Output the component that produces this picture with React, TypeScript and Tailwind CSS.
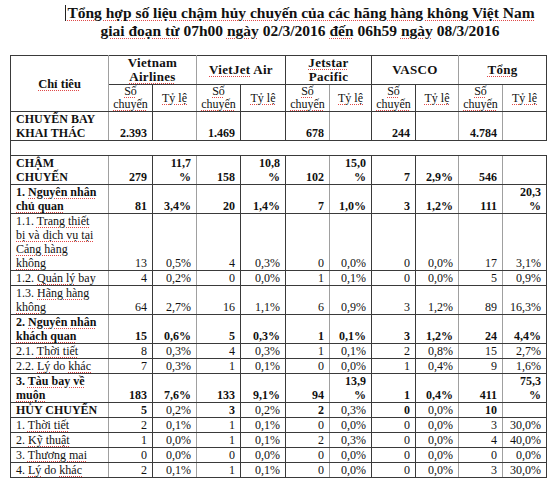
import type { ReactNode } from 'react';

const widths = [98, 44, 44, 44, 45, 44, 42, 44, 43, 44, 44];
// columns whose right-hand rule is drawn lighter in the document
const grayRight = [0, 2, 5, 8, 9];

function Sq({ children }: { children: ReactNode }) {
  return (
    <span className="underline decoration-dotted decoration-[#e04848] decoration-[1px] underline-offset-[2px]">
      {children}
    </span>
  );
}

type Row = {
  label: ReactNode;
  vals: string[];
  bold?: boolean;
  boldNums?: boolean;
};

const rows: Row[] = [
  {
    label: (
      <>
        CHUYẾN BAY
        <br />
        KHAI THÁC
      </>
    ),
    vals: ['2.393', '', '1.469', '', '678', '', '244', '', '4.784', ''],
    bold: true,
  },
  {
    label: (
      <>
        CHẬM
        <br />
        CHUYẾN
      </>
    ),
    vals: ['279', '11,7\n%', '158', '10,8\n%', '102', '15,0\n%', '7', '2,9%', '546', ''],
    bold: true,
  },
  {
    label: (
      <>
        1. <Sq>Nguyên nhân</Sq>
        <br />
        <Sq>chủ quan</Sq>
      </>
    ),
    vals: ['81', '3,4%', '20', '1,4%', '7', '1,0%', '3', '1,2%', '111', '20,3\n%'],
    bold: true,
  },
  {
    label: (
      <>
        1.1. <Sq>Trang thiết</Sq>
        <br />
        <Sq>bị và dịch vụ tại</Sq>
        <br />
        <Sq>Cảng hàng</Sq>
        <br />
        <Sq>không</Sq>
      </>
    ),
    vals: ['13', '0,5%', '4', '0,3%', '0', '0,0%', '0', '0,0%', '17', '3,1%'],
  },
  {
    label: (
      <>
        1.2. <Sq>Quản lý</Sq> bay
      </>
    ),
    vals: ['4', '0,2%', '0', '0,0%', '1', '0,1%', '0', '0,0%', '5', '0,9%'],
  },
  {
    label: (
      <>
        1.3. <Sq>Hãng hàng</Sq>
        <br />
        <Sq>không</Sq>
      </>
    ),
    vals: ['64', '2,7%', '16', '1,1%', '6', '0,9%', '3', '1,2%', '89', '16,3%'],
  },
  {
    label: (
      <>
        2. <Sq>Nguyên nhân</Sq>
        <br />
        <Sq>khách quan</Sq>
      </>
    ),
    vals: ['15', '0,6%', '5', '0,3%', '1', '0,1%', '3', '1,2%', '24', '4,4%'],
    bold: true,
  },
  {
    label: (
      <>
        2.1. <Sq>Thời tiết</Sq>
      </>
    ),
    vals: ['8', '0,3%', '4', '0,3%', '1', '0,1%', '2', '0,8%', '15', '2,7%'],
  },
  {
    label: (
      <>
        2.2. <Sq>Lý</Sq> do <Sq>khác</Sq>
      </>
    ),
    vals: ['7', '0,3%', '1', '0,1%', '0', '0,0%', '1', '0,4%', '9', '1,6%'],
  },
  {
    label: (
      <>
        3. <Sq>Tàu bay về</Sq>
        <br />
        <Sq>muộn</Sq>
      </>
    ),
    vals: ['183', '7,6%', '133', '9,1%', '94', '13,9\n%', '1', '0,4%', '411', '75,3\n%'],
    bold: true,
  },
  {
    label: <span className="font-bold">HỦY CHUYẾN</span>,
    vals: ['5', '0,2%', '3', '0,2%', '2', '0,3%', '0', '0,0%', '10', ''],
    boldNums: true,
  },
  {
    label: (
      <>
        1. <Sq>Thời tiết</Sq>
      </>
    ),
    vals: ['2', '0,1%', '1', '0,1%', '0', '0,0%', '0', '0,0%', '3', '30,0%'],
  },
  {
    label: (
      <>
        2. <Sq>Kỹ thuật</Sq>
      </>
    ),
    vals: ['1', '0,0%', '1', '0,1%', '2', '0,3%', '0', '0,0%', '4', '40,0%'],
  },
  {
    label: (
      <>
        3. <Sq>Thương mai</Sq>
      </>
    ),
    vals: ['0', '0,0%', '0', '0,0%', '0', '0,0%', '0', '0,0%', '0', '0,0%'],
  },
  {
    label: (
      <>
        4. <Sq>Lý</Sq> do <Sq>khác</Sq>
      </>
    ),
    vals: ['2', '0,1%', '1', '0,1%', '0', '0,0%', '0', '0,0%', '3', '30,0%'],
  },
];

function edge(col: number) {
  return grayRight.includes(col) ? 'border border-[#3a3a3a] border-r-[#a0a0a0]' : 'border border-[#3a3a3a]';
}

function Value({ v }: { v: string }) {
  const parts = v.split('\n');
  return (
    <>
      {parts.map((p, i) => (
        <span key={i}>
          {i > 0 && <br />}
          {p}
        </span>
      ))}
    </>
  );
}

const airlines: ReactNode[] = [
  <>
    Vietnam
    <br />
    <Sq>Airlines</Sq>
  </>,
  <>
    <Sq>VietJet</Sq> Air
  </>,
  <>
    <Sq>Jetstar</Sq>
    <br />
    Pacific
  </>,
  <>VASCO</>,
  <>
    <Sq>Tổng</Sq>
  </>,
];

export default function App() {
  return (
    <div className="w-[558px] h-[488px] bg-white text-[#111] overflow-hidden" style={{ fontFamily: '"Liberation Serif", "Times New Roman", serif' }}>
      <div className="pt-[4px] pl-[42px] text-center text-[15.5px] leading-[18px] font-bold">
        <div>
          <span className="inline-block w-0 h-[16px] align-[-3px] border-l border-[#222] mr-[1px]" />
          <Sq>Tổng hợp số liệu chậm hủy chuyến của các hãng hàng không Việt Nam</Sq>
        </div>
        <div>
          <Sq>giai đoạn từ</Sq> 07h00 <Sq>ngày</Sq> 02/3/2016 <Sq>đến</Sq> 06h59 <Sq>ngày</Sq> 08/3/2016
        </div>
      </div>

      <table className="ml-[10px] mt-[15px] table-fixed border-collapse text-[12px]" style={{ width: 536 }}>
        <colgroup>
          {widths.map((w, i) => (
            <col key={i} style={{ width: w }} />
          ))}
        </colgroup>
        <thead>
          <tr className="leading-[14px] h-[28px]">
            <th rowSpan={2} className={`${edge(0)} text-[12.5px] font-bold align-middle text-center`}>
              <Sq>Chỉ tiêu</Sq>
            </th>
            {airlines.map((a, i) => (
              <th key={i} colSpan={2} className={`${edge(i * 2 + 2)} text-[13px] tracking-[0.3px] font-bold align-middle text-center px-[2px]`}>
                {a}
              </th>
            ))}
          </tr>
          <tr className="leading-[13px] h-[26px]">
            {Array.from({ length: 10 }).map((_, i) =>
              i % 2 === 0 ? (
                <th key={i} className={`${edge(i + 1)} font-normal align-middle text-center px-[2px] whitespace-nowrap`}>
                  <Sq>Số</Sq>
                  <br />
                  <Sq>chuyến</Sq>
                </th>
              ) : (
                <th key={i} className={`${edge(i + 1)} font-normal align-middle text-center px-[2px] whitespace-nowrap`}>
                  <Sq>Tỷ lệ</Sq>
                </th>
              )
            )}
          </tr>
        </thead>
        <tbody className="leading-[14px]">
          {rows.map((r, ri) => (
            <>
              <tr key={`r${ri}`} className={r.bold ? 'font-bold' : ''}>
                <td className={`${edge(0)} align-top text-left px-[5px] py-0 whitespace-nowrap`}>{r.label}</td>
                {r.vals.map((v, vi) => (
                  <td
                    key={vi}
                    className={`${edge(vi + 1)} align-bottom text-right px-[5px] py-0 whitespace-nowrap ${
                      r.boldNums && vi % 2 === 0 ? 'font-bold' : ''
                    }`}
                  >
                    <Value v={v} />
                  </td>
                ))}
              </tr>
              {ri === 0 && (
                <tr key="gap" className="h-[15px]">
                  <td colSpan={11} className="border-y border-l border-r-0 border-[#3a3a3a]" />
                </tr>
              )}
            </>
          ))}
        </tbody>
      </table>
    </div>
  );
}
